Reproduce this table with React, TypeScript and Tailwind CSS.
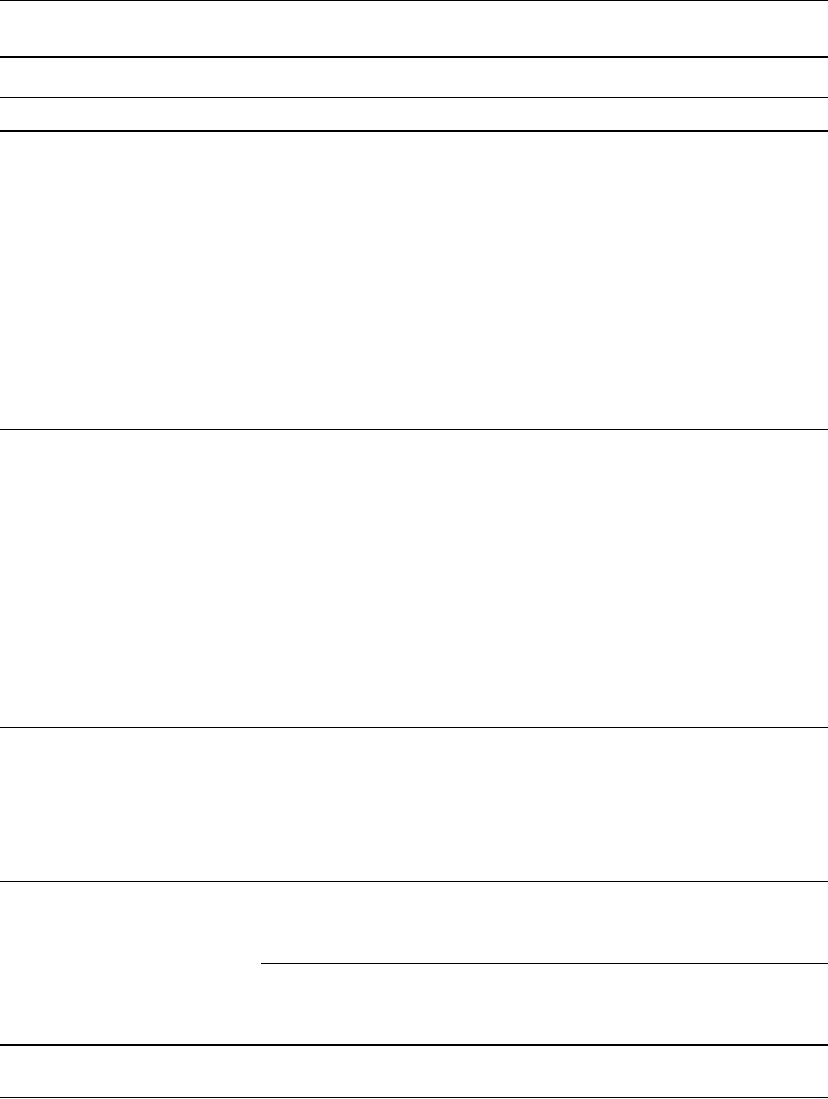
export default function App() {
  return (
    <div className="w-[828px] min-h-[1099px] bg-white font-['Liberation_Sans',sans-serif] text-black">
      <div className="border-t border-black">
        <div className="h-[57px] border-b-2 border-black" />
        <div className="h-[40px] border-b border-black" />
        <div className="h-[34px] border-b-2 border-black" />
        <div className="h-[298px] border-b border-black" />
        <div className="h-[298px] border-b border-black" />
        <div className="h-[154px] border-b border-black" />
        <div className="flex border-b-2 border-black">
          <div className="w-[261px] shrink-0" />
          <div className="flex flex-1 flex-col">
            <div className="h-[82px] border-b border-black" />
            <div className="h-[80px]" />
          </div>
        </div>
        <div className="h-[52px] border-b border-black" />
      </div>
    </div>
  );
}
